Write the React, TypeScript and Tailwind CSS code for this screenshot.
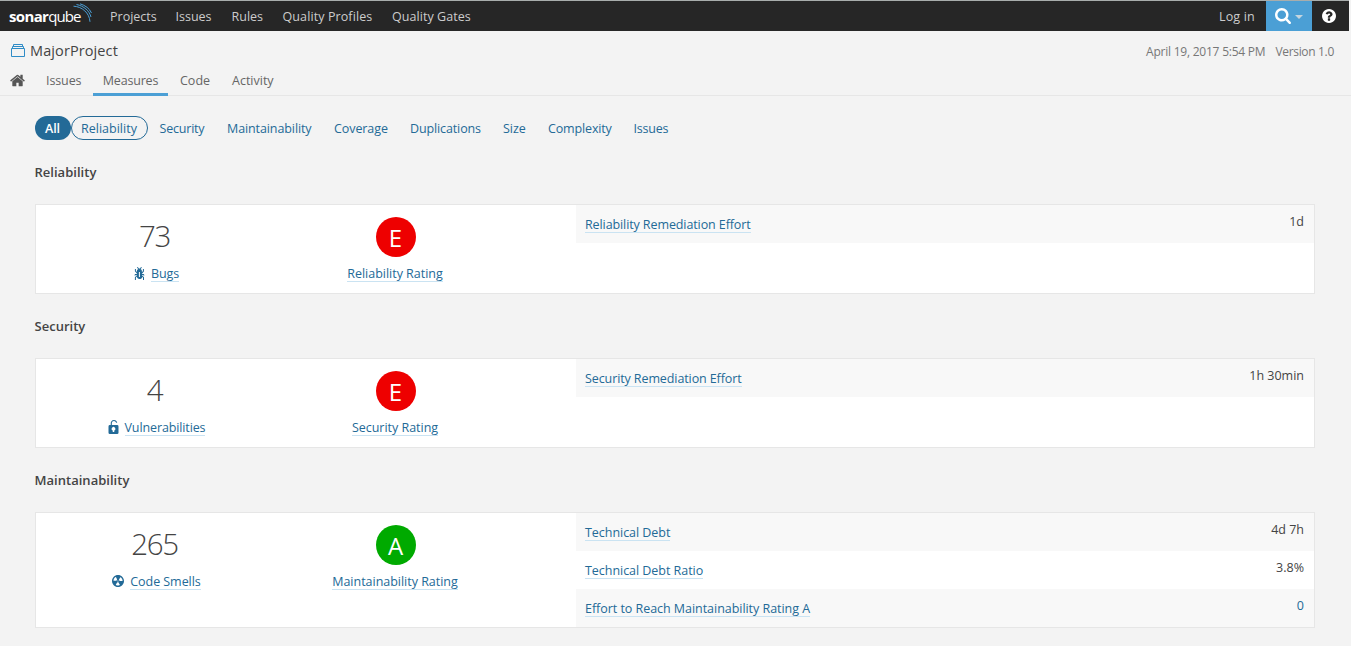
import React from "react";

const HOME =
  "M1472 992v480q0 26-19 45t-45 19h-384v-384h-256v384h-384q-26 0-45-19t-19-45v-480q0-1 .5-3t.5-3l575-474 575 474q1 2 1 6zm223-69l-62 74q-8 9-21 11h-3q-13 0-21-7l-692-577-692 577q-12 8-24 7-13-2-21-11l-62-74q-8-10-7-23.5t11-21.5l719-599q32-26 76-26t76 26l244 204v-195q0-14 9-23t23-9h192q14 0 23 9t9 23v408l219 182q10 8 11 21.5t-7 23.5z";
const SEARCH =
  "M1216 832q0-185-131.5-316.5t-316.5-131.5-316.5 131.5-131.5 316.5 131.5 316.5 316.5 131.5 316.5-131.5 131.5-316.5zm512 832q0 52-38 90t-90 38q-54 0-90-38l-343-342q-179 124-399 124-143 0-273.5-55.5t-225-150-150-225-55.5-273.5 55.5-273.5 150-225 225-150 273.5-55.5 273.5 55.5 225 150 150 225 55.5 273.5q0 220-124 399l343 343q37 37 37 90z";
const HELP =
  "M1024 1376v-192q0-14-9-23t-23-9h-192q-14 0-23 9t-9 23v192q0 14 9 23t23 9h192q14 0 23-9t9-23zm256-672q0-88-55.5-163t-138.5-116-170-41q-243 0-371 213-15 24 8 42l132 100q7 6 19 6 16 0 25-12 53-68 86-92 34-24 86-24 48 0 85.5 26t37.5 59q0 38-20 61t-68 45q-63 28-115.5 86.5t-52.5 125.5v36q0 14 9 23t23 9h192q14 0 23-9t9-23q0-19 21.5-49.5t54.5-49.5q32-18 49-28.5t46-35 44.5-48 28-60.5 12.5-81zm384 192q0 209-103 385.5t-279.5 279.5-385.5 103-385.5-103-279.5-279.5-103-385.5 103-385.5 279.5-279.5 385.5-103 385.5 103 279.5 279.5 103 385.5z";
const BUG =
  "M11 9h1.3l.5.8.8-.5-.8-1.3H11v-.3l2-2.3V3h-1v2l-1 1.2V5c-.1-.8-.7-1.5-1.4-1.9L11 1.8l-.7-.7-1.8 1.6-1.8-1.6-.7.7 1.5 1.3C6.7 3.5 6.1 4.2 6 5v1.1L5 5V3H4v2.3l2 2.3V8H4.2l-.7 1.2.8.5.4-.7H6v.3l-2 1.9V14h1v-2.4l1-1C6 12 7.1 13 8.4 13h.8c.7 0 1.4-.3 1.8-.9.3-.4.3-.9.2-1.4l.9.9V14h1v-2.8l-2-1.9V9zm-2 2H8V6h1v5z";
const LOCK =
  "M10.8 5H6V3.9a2.28 2.28 0 0 1 2-2.5 2.22 2.22 0 0 1 1.8 1.2.48.48 0 0 0 .7.2.48.48 0 0 0 .2-.7A3 3 0 0 0 8 .4 3.34 3.34 0 0 0 5 3.9V5h-.8A1.2 1.2 0 0 0 3 6.2v5.6A1.2 1.2 0 0 0 4.2 13h6.6a1.2 1.2 0 0 0 1.2-1.2V6.2A1.2 1.2 0 0 0 10.8 5zM8.2 9.8V11.2H6.8V9.8a1.6 1.6 0 1 1 1.4 0z";
const SMELL =
  "M8 2C4.7 2 2 4.7 2 8s2.7 6 6 6 6-2.7 6-6-2.7-6-6-6zm-.5 5.5h.9v.9h-.9v-.9zm-3.8.2c-.1 0-.2-.1-.2-.2 0-.4.1-1.2.6-2S5.3 4.2 5.6 4c.2 0 .3 0 .3.1l1.3 2.3c0 .1 0 .2-.1.2-.1.2-.2.3-.3.5-.1.2-.2.4-.2.5 0 .1-.1.2-.2.2l-2.7-.1zM9.9 12c-.3.2-1.1.5-2 .5-.9 0-1.7-.3-2-.5-.1 0-.1-.2-.1-.3l1.3-2.3c0-.1.1-.1.2-.1.2.1.3.1.5.1s.4 0 .5-.1c.1 0 .2 0 .2.1l1.3 2.3c.2.2.2.3.1.3zm2.5-4.1L9.7 8c-.1 0-.2-.1-.2-.2 0-.2-.1-.4-.2-.5 0-.1-.2-.3-.3-.4-.1 0-.1-.1-.1-.2l1.3-2.3c.1-.1.2-.1.3-.1.3.2 1 .7 1.5 1.5s.6 1.6.6 2c0 0-.1.1-.2.1z";

function Icon({ d, box, className }: { d: string; box: string; className: string }) {
  return (
    <svg viewBox={box} className={"shrink-0 " + className} fill="currentColor" fillRule="evenodd">
      <path d={d} />
    </svg>
  );
}

function Logo() {
  return (
    <div className="flex h-[30px] w-[101px] shrink-0 pl-[9px] text-white">
      <div className="flex h-[30px] w-[64px] items-center whitespace-nowrap text-[15px] leading-[30px] tracking-[-0.65px]">
        <span className="font-bold">sonar</span>
        <span className="font-normal tracking-[-0.9px]">qube</span>
      </div>
      <svg viewBox="0 0 20 20" className="mt-[2px] h-5 w-5 shrink-0" fill="none" stroke="#4b9fd5" strokeWidth="1">
        <path d="M.5 3.2C9 3.5 16.5 10 17 18.8" />
        <path d="M3.5 1.5C11 3 16.5 8 18 14" />
        <path d="M7 .8C12.500 2.500 16.500 5.500 18.500 10" />
      </svg>
    </div>
  );
}

interface Row { name: string; value: string }
interface Domain {
  title: string; titleCls: string; count: string; icon: React.ReactNode; label: string; labelCls: string;
  grade: string; gradeCls: string; rating: string; rows: Row[]; bodyCls: string;
}

const domains: Domain[] = [
  {
    title: "Reliability", titleCls: "tracking-[0.02px]", count: "73", label: "Bugs", labelCls: "tracking-[-0.1px]",
    icon: <Icon d={BUG} box="3.5 1 10.2 13" className="mb-[2px] mr-[6px] h-[13px] w-[11px]" />,
    grade: "E", gradeCls: "bg-[#ee0000]", rating: "Reliability Rating",
    bodyCls: "h-[90px]",
    rows: [{ name: "Reliability Remediation Effort", value: "1d" }],
  },
  {
    title: "Security", titleCls: "tracking-[0.02px]", count: "4", label: "Vulnerabilities", labelCls: "tracking-[-0.12px]",
    icon: <Icon d={LOCK} box="3 .4 9 12.6" className="mb-[3px] mr-[6px] h-[14px] w-[11px]" />,
    grade: "E", gradeCls: "bg-[#ee0000]", rating: "Security Rating",
    bodyCls: "h-[90px]",
    rows: [{ name: "Security Remediation Effort", value: "1h 30min" }],
  },
  {
    title: "Maintainability", titleCls: "tracking-[0.02px]", count: "265", label: "Code Smells", labelCls: "tracking-[-0.05px]",
    icon: <Icon d={SMELL} box="2 2 12 12" className="mb-[2px] mr-[6px] h-3 w-3" />,
    grade: "A", gradeCls: "bg-[#00aa00]", rating: "Maintainability Rating",
    bodyCls: "h-[116px]",
    rows: [
      { name: "Technical Debt", value: "4d 7h" },
      { name: "Technical Debt Ratio", value: "3.8%" },
      { name: "Effort to Reach Maintainability Rating A", value: "0" },
    ],
  },
];

const link = "block h-4 whitespace-nowrap border-b border-[#cae3f2] leading-4 text-[#236a97] ";

function DomainCard({ d }: { d: Domain }) {
  return (
    <section className="mb-[22px]">
      <h3 className={"flex h-[42px] items-start text-[13px] font-semibold leading-[20px] text-[#444] " + d.titleCls}>{d.title}</h3>
      <div className={"flex border border-[#e6e6e6] bg-white " + d.bodyCls}>
        <div className="flex w-[240px] flex-col items-center">
          <div className="mt-[11px] h-[41px] pr-[2px] text-[29.5px] font-light leading-10 tracking-[-1.4px]">{d.count}</div>
          <div className="mt-[9px] flex h-4 items-center pl-[2px] text-[#236a97]">
            {d.icon}
            <span className={link + d.labelCls}>{d.label}</span>
          </div>
        </div>
        <div className="flex w-[240px] flex-col items-center">
          <div className={"mt-[12px] flex h-10 w-10 items-center justify-center rounded-full pt-[2px] text-[24px] text-white " + d.gradeCls}>{d.grade}</div>
          <div className="mt-[9px] pr-px"><span className={link + "tracking-[-0.02px]"}>{d.rating}</span></div>
        </div>
        <div className="ml-[60px] flex-1">
          {d.rows.map((r, i) => (
            <div key={r.name} className={"flex h-[38px] justify-between pl-[9.5px] pr-[10px] " + (i % 2 === 0 ? "bg-[#f8f8f8]" : "bg-white")}>
              <div className="pt-[12px]">
                <span className={link + (r.name.includes("Remediation") ? "tracking-[-0.1px]" : "tracking-[-0.04px]")}>{r.name}</span>
              </div>
              <div className={"pt-[7px] leading-5 " + (r.value === "0" ? "text-[#236a97]" : "text-[#444]")}>{r.value}</div>
            </div>
          ))}
        </div>
      </div>
    </section>
  );
}

const nav = [
  ["Projects", "w-[65.500px]"], ["Issues", "w-[56px]"], ["Rules", "w-[51px]"], ["Quality Profiles", "w-[109.500px] tracking-[0.1px]"], ["Quality Gates", "w-[90px] tracking-[0.05px]"],
];
const filters = [
  ["Security", "w-[67.500px] tracking-[-0.2px]"], ["Maintainability", "w-[107px] tracking-[-0.1px]"], ["Coverage", "w-[76px] tracking-[-0.08px]"],
  ["Duplications", "w-[93px] tracking-[-0.12px]"], ["Size", "w-[45px]"], ["Complexity", "w-[85.500px] tracking-[-0.15px]"], ["Issues", "w-[50px] tracking-[-0.2px]"],
];

export default function App() {
  return (
    <div className="h-[646px] w-[1351px] overflow-hidden bg-[#f3f3f3] font-['Open_Sans','Noto_Sans',sans-serif] text-[12.5px] text-[#444]">
      <header className="mr-[2px] flex h-[31px] border-t border-[#a8adac] bg-[#262626] text-[12.5px] leading-[32px] text-[#ccc]">
        <Logo />
        <nav className="flex flex-1 whitespace-nowrap pl-[9px]">
          {nav.map(([n, w]) => <a key={n} className={w}>{n}</a>)}
        </nav>
        <a className="w-[47px] whitespace-nowrap tracking-[0.15px]">Log in</a>
        <button className="flex h-[30px] w-[46px] items-center bg-[#4b9fd5] pl-[9px]">
          <Icon d={SEARCH} box="64 128 1664 1664" className="h-[16px] w-[16px] text-white" />
          <svg viewBox="0 0 8 4" className="ml-[4px] mt-px h-1 w-2" fill="#c4d5df"><path d="M0 0h8L4 4z" /></svg>
        </button>
        <div className="flex h-[30px] w-[37px] items-center pl-[10px]">
          <Icon d={HELP} box="128 128 1536 1536" className="h-[14px] w-[14px] text-white" />
        </div>
      </header>
      <div className="h-[65px] border-b border-[#e6e6e6]">
        <div className="flex h-[37px] items-center pl-[11px] pr-[17px]">
          <svg viewBox="0 0 14 13" className="mt-[2px] h-[13px] w-[14px]" fill="none" stroke="#2f8cc7">
            <path d="M.5 4.5h13v8H.5zM1.5 4.5v-2h11v2M2.5 2.5v-2h9v2" />
          </svg>
          <h1 className="ml-[5px] mt-[2px] text-[14.5px] tracking-[0.1px]">MajorProject</h1>
          <div className="ml-auto mt-[4px] flex gap-[10px] whitespace-nowrap text-[12px] text-[#777]">
            <span className="tracking-[-0.23px]">April 19, 2017 5:54 PM</span><span className="tracking-[-0.32px]">Version 1.0</span>
          </div>
        </div>
        <nav className="flex h-[28px] pl-[10px] leading-[26px] text-[#666]">
          <Icon d={HOME} box="64 192 1664 1408" className="mt-[6px] h-[13px] w-[15px] text-[#555]" />
          <a className="ml-[21px] w-[47px] tracking-[-0.1px]">Issues</a>
          <a className="h-[28px] w-[75px] border-b-[3px] border-[#4b9fd5] text-center tracking-[-0.2px]">Measures</a>
          <a className="ml-3 w-[52px]">Code</a>
          <a>Activity</a>
        </nav>
      </div>
      <main className="pl-[34.500px] pr-9 pt-[20px]">
        <div className="flex h-6 whitespace-nowrap leading-[26px] text-[#236a97]">
          <a className="w-9 rounded-full bg-[#236a97] text-center font-semibold text-white">All</a>
          <a className="mr-3 w-[77px] rounded-full border border-[#236a97] text-center leading-[24px]">Reliability</a>
          {filters.map(([n, w]) => <a key={n} className={w}>{n}</a>)}
        </div>
        <div className="mt-[22px]">
          {domains.map((d) => <DomainCard key={d.title} d={d} />)}
        </div>
      </main>
    </div>
  );
}
